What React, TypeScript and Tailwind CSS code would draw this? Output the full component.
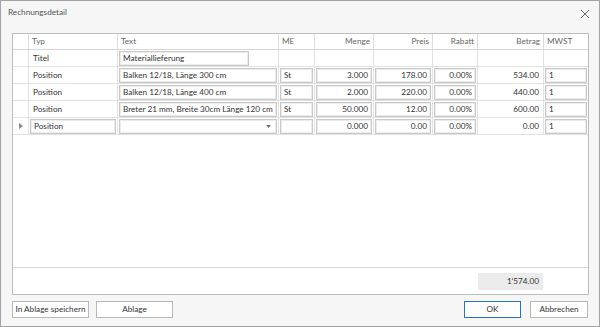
import React from "react";

const cols = "grid-cols-[16px_89px_161px_36px_59px_59px_45px_66px_44px]";

function Box({ children, right, className = "" }: { children?: React.ReactNode; right?: boolean; className?: string }) {
  return (
    <div
      className={
        "h-[15px] mx-[1px] border border-[#c9c9c9] bg-white flex items-center px-[3px] whitespace-nowrap overflow-hidden shadow-[inset_0_0_0_1px_#ececec] " +
        (right ? "justify-end " : "") +
        className
      }
    >
      {children}
    </div>
  );
}

function Cell({ children, last }: { children?: React.ReactNode; last?: boolean }) {
  return (
    <div className={"h-[17px] border-b border-[#e2e2e2] flex flex-col justify-center " + (last ? "" : "border-r ")}>
      {children}
    </div>
  );
}

function Plain({ children, right }: { children?: React.ReactNode; right?: boolean }) {
  return <div className={"px-[4px] whitespace-nowrap " + (right ? "text-right" : "")}>{children}</div>;
}

type Row = {
  typ: string;
  typBox?: boolean;
  text: string;
  textBoxW?: string;
  me?: string;
  menge?: string;
  preis?: string;
  rabatt?: string;
  betrag?: string;
  mwst?: string;
  current?: boolean;
  dropdown?: boolean;
};

const rows: Row[] = [
  { typ: "Titel", text: "Materiallieferung", textBoxW: "w-[130px]" },
  { typ: "Position", text: "Balken 12/18, Länge 300 cm", me: "St", menge: "3.000", preis: "178.00", rabatt: "0.00%", betrag: "534.00", mwst: "1" },
  { typ: "Position", text: "Balken 12/18, Länge 400 cm", me: "St", menge: "2.000", preis: "220.00", rabatt: "0.00%", betrag: "440.00", mwst: "1" },
  { typ: "Position", text: "Breter 21 mm, Breite 30cm Länge 120 cm", me: "St", menge: "50.000", preis: "12.00", rabatt: "0.00%", betrag: "600.00", mwst: "1" },
  { typ: "Position", typBox: true, text: "", dropdown: true, me: "", menge: "0.000", preis: "0.00", rabatt: "0.00%", betrag: "0.00", mwst: "1", current: true },
];

export default function App() {
  return (
    <div
      className="w-[600px] h-[327px] border border-[#a3a3a3] bg-[#f6f6f6] flex flex-col text-[#333] text-[8.2px] leading-none"
      style={{ fontFamily: 'Lato, "Liberation Sans", sans-serif' }}
    >
      <div className="h-[32px] flex items-start justify-between pl-[7px] pr-[9px] pt-[7px]">
        <span className="text-[#555] text-[8.2px]">Rechnungsdetail</span>
        <svg width="10" height="10" viewBox="0 0 10 10" className="mt-[1px]">
          <path d="M1 1 L9 9 M9 1 L1 9" stroke="#6a6a6a" strokeWidth="1" />
        </svg>
      </div>
      <div className="ml-[11px] w-[577px] h-[262px] border border-[#bdbdbd] bg-white flex flex-col">
        <div className={"grid " + cols + " text-[#666]"}>
          {["", "Typ", "Text", "ME", "Menge", "Preis", "Rabatt", "Betrag", "MWST"].map((h, i) => (
            <div
              key={i}
              className={
                "h-[16px] border-b border-[#d6d6d6] flex items-center px-[3px] " +
                (i === 8 ? "" : "border-r border-r-[#dcdcdc] ") +
                (i >= 4 && i <= 7 ? "justify-end" : "")
              }
            >
              {h}
            </div>
          ))}
        </div>
        {rows.map((r, ri) => (
          <div key={ri} className={"grid " + cols}>
            <Cell>
              {r.current ? (
                <div className="flex justify-center">
                  <svg width="4" height="6" viewBox="0 0 4 6">
                    <path d="M0 0 L4 3 L0 6 Z" fill="#888" />
                  </svg>
                </div>
              ) : null}
            </Cell>
            <Cell>{r.typBox ? <Box>{r.typ}</Box> : <Plain>{r.typ}</Plain>}</Cell>
            <Cell>
              <Box className={r.textBoxW ?? ""}>
                <span className="flex-1">{r.text}</span>
                {r.dropdown ? (
                  <svg width="5" height="3" viewBox="0 0 5 3" className="mr-[2px]">
                    <path d="M0 0 L5 0 L2.5 3 Z" fill="#777" />
                  </svg>
                ) : null}
              </Box>
            </Cell>
            <Cell>{r.me !== undefined ? <Box>{r.me}</Box> : null}</Cell>
            <Cell>{r.menge !== undefined ? <Box right>{r.menge}</Box> : null}</Cell>
            <Cell>{r.preis !== undefined ? <Box right>{r.preis}</Box> : null}</Cell>
            <Cell>{r.rabatt !== undefined ? <Box right>{r.rabatt}</Box> : null}</Cell>
            <Cell>{r.betrag !== undefined ? <Plain right>{r.betrag}</Plain> : null}</Cell>
            <Cell last>{r.mwst !== undefined ? <Box>{r.mwst}</Box> : null}</Cell>
          </div>
        ))}
        <div className="flex-1" />
        <div className="h-[27px] border-t border-[#d6d6d6] flex items-center">
          <div className="ml-[465px] w-[65px] h-[17px] bg-[#ebebeb] flex items-center justify-end pr-[4px]">1'574.00</div>
        </div>
      </div>
      <div className="flex mt-[6px] ml-[11px] mr-[11px]">
        <button className="w-[77px] h-[17px] border border-[#b8b8b8] bg-white text-[8.2px] leading-none whitespace-nowrap">In Ablage speichern</button>
        <button className="ml-[7px] w-[77px] h-[17px] border border-[#b8b8b8] bg-white text-[8.2px] leading-none">Ablage</button>
        <div className="flex-1" />
        <button className="w-[57px] h-[17px] border border-[#2a73c4] bg-white text-[8.2px] leading-none">OK</button>
        <button className="ml-[9px] w-[58px] h-[17px] border border-[#b8b8b8] bg-white text-[8.2px] leading-none">Abbrechen</button>
      </div>
    </div>
  );
}
